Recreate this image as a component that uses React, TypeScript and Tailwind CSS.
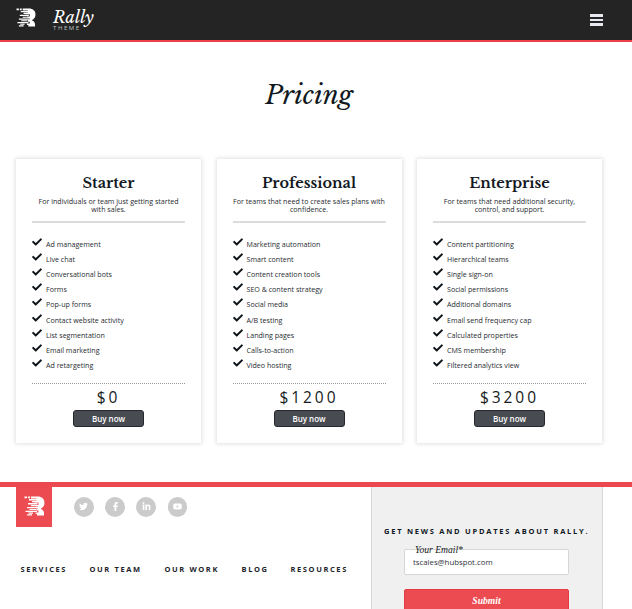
import React from "react";
import { FaCheck, FaTwitter, FaFacebookF, FaLinkedinIn, FaYoutube } from "react-icons/fa";

const plans = [
  {
    name: "Starter",
    blurb: ["For individuals or team just getting started", "with sales."],
    price: "$0",
    features: ["Ad management", "Live chat", "Conversational bots", "Forms", "Pop-up forms", "Contact website activity", "List segmentation", "Email marketing", "Ad retargeting"],
  },
  {
    name: "Professional",
    blurb: ["For teams that need to create sales plans with", "confidence."],
    price: "$1200",
    features: ["Marketing automation", "Smart content", "Content creation tools", "SEO & content strategy", "Social media", "A/B testing", "Landing pages", "Calls-to-action", "Video hosting"],
  },
  {
    name: "Enterprise",
    blurb: ["For teams that need additional security,", "control, and support."],
    price: "$3200",
    features: ["Content partitioning", "Hierarchical teams", "Single sign-on", "Social permissions", "Additional domains", "Email send frequency cap", "Calculated properties", "CMS membership", "Filtered analytics view"],
  },
];

const links = [
  { label: "SERVICES", width: "w-[69px]" },
  { label: "OUR TEAM", width: "w-[75px]" },
  { label: "OUR WORK", width: "w-[77px]" },
  { label: "BLOG", width: "w-[49px]" },
  { label: "RESOURCES", width: "w-[62px]" },
];

const socials = [FaTwitter, FaFacebookF, FaLinkedinIn, FaYoutube];

function RallyMark({ className }: { className: string }) {
  return (
    <svg viewBox="0 0 21 20" className={className} fill="currentColor">
      <path d="M7 0.5H13.5C18 0.5 20.5 3 20.5 6.8C20.5 9.6 19 11.8 16.6 12.8C18.8 13.6 19.8 15 20 17V19.5H13V17.8H11.5V16.4H14.5V14.4H12.5V12.6H14V10.6H12V8.9H14.5V6.6H10.5V4.9H12.5V2.5H7Z" />
      <path d="M0.5 0.5H3V2.3H0.5ZM4 0.5H6V2.3H4ZM5 3.1H13V4.4H5ZM8 5.1H13.5V6.2H8ZM4 7H13.5V8.4H4ZM7 9.1H12.5V10.2H7ZM3 11H14V12.3H3ZM5.5 12.9H12V14H5.5ZM1.5 14.7H13V16H1.5ZM4.5 16.6H9V17.7H4.5ZM3 18.2H8V19.5H3Z" />
    </svg>
  );
}

function PlanCard({ plan }: { plan: (typeof plans)[number] }) {
  return (
    <section className="flex h-[284px] w-[185px] flex-col items-center bg-white px-4 pt-[14px] shadow-[0_0_4px_1px_rgba(0,0,0,0.12)]">
      <h2 className="h-[24px] font-['Libre_Baskerville','Liberation_Serif',serif] text-[14.5px] leading-[21px] font-bold text-[#13191f]">{plan.name}</h2>
      <p className="h-[24px] text-center text-[7.1px] leading-[8.6px] whitespace-nowrap text-[#272b31]">
        {plan.blurb[0]}
        <br />
        {plan.blurb[1]}
      </p>
      <div className="h-[2px] w-full shrink-0 bg-[#dcdcdc]" />
      <ul className="mt-[13.5px] h-[146.5px] w-full">
        {plan.features.map((feature) => (
          <li key={feature} className="flex h-[15.2px] items-center gap-[4px] text-[7.1px] leading-[15px] whitespace-nowrap text-[#272b31]">
            <FaCheck className="mb-[4px] size-[10px] shrink-0 text-[#0d1318]" />
            <span className="pt-[1px]">{feature}</span>
          </li>
        ))}
      </ul>
      <div className="w-full border-t border-dotted border-[#999]" />
      <p className="mt-[3px] h-[23px] text-[15.5px] leading-[21px] tracking-[2.9px] text-[#151a20]">{plan.price}</p>
      <button className="h-[17px] w-[71px] shrink-0 rounded-[3px] border border-[#25292f] bg-[#494b52] text-[8px] leading-[13px] font-semibold text-white">Buy now</button>
    </section>
  );
}

export default function App() {
  return (
    <div className="h-[609px] w-[632px] overflow-hidden bg-white font-['Open_Sans','Noto_Sans',sans-serif]">
      <header className="flex h-[42px] items-start justify-between border-b-2 border-[#ee4047] bg-[#242424] pr-[29px] pl-4 text-white">
        <div className="flex">
          <RallyMark className="mt-[8px] h-[19px] w-[20px]" />
          <div className="ml-[17px] pt-[9px]">
            <div className="h-[16px] font-['Libre_Baskerville','Liberation_Serif',serif] text-[16.5px] leading-[17px] italic">Rally</div>
            <div className="text-[6px] leading-[6px] tracking-[1.6px] text-[#bfc4c8]">THEME</div>
          </div>
        </div>
        <div className="mt-[14px] flex w-[13px] flex-col gap-[2px]">
          <div className="h-[3px] bg-[#e8e8ef]" />
          <div className="h-[2px] bg-[#e8e8ef]" />
          <div className="h-[3px] bg-[#e8e8ef]" />
        </div>
      </header>

      <main className="h-[440px]">
        <h1 className="h-[116.5px] pt-[36px] pr-[14px] text-center font-['Libre_Baskerville','Liberation_Serif',serif] text-[25.5px] leading-[34px] text-[#101820] italic">Pricing</h1>
        <div className="flex gap-[15.5px] pl-4">
          {plans.map((plan) => (
            <PlanCard key={plan.name} plan={plan} />
          ))}
        </div>
      </main>

      <footer className="h-[127px] border-t-[5px] border-[#ec484f]">
        <div className="flex h-full">
          <div className="w-[371px] pl-4">
            <div className="flex h-[40px]">
              <div className="flex h-[40px] w-[36px] justify-center bg-[#ed4b52] pt-[9px] text-white">
                <RallyMark className="h-[20px] w-[21px]" />
              </div>
              <div className="ml-[22px] flex gap-[11.5px] pt-[10px]">
                {socials.map((Icon, index) => (
                  <div key={index} className="flex size-[19.7px] items-center justify-center rounded-full bg-[#cbcbcb] text-white">
                    <Icon className="size-[9px]" />
                  </div>
                ))}
              </div>
            </div>
            <nav className="mt-[36px] ml-[4.5px] flex text-[7.5px] leading-[13px] font-bold tracking-[1.6px] whitespace-nowrap text-[#1d232a]">
              {links.map((link) => (
                <a key={link.label} className={link.width}>{link.label}</a>
              ))}
            </nav>
          </div>
          <aside className="h-full w-[232px] border-x border-[#d8d8d8] bg-[#f0f0f0]">
            <h3 className="pt-[38px] pl-[12px] text-[7.5px] leading-[13px] font-bold tracking-[1.75px] whitespace-nowrap text-[#11181f]">GET NEWS AND UPDATES ABOUT RALLY.</h3>
            <div className="relative mt-[11px] ml-[32px] h-[26px] w-[165px] rounded-[2px] border border-[#d6d6d6] bg-white pl-[8px] text-[7.8px] leading-[25px] text-[#30343b]">
              <label className="absolute -top-[7px] left-[10px] font-['Liberation_Serif',serif] text-[9.6px] leading-[13px] whitespace-nowrap text-[#151a20] italic">Your Email*</label>
              tscales@hubspot.com
            </div>
            <button className="mt-[14px] ml-[32px] h-[32px] w-[165px] rounded-t-[2px] border border-[#e63b42] bg-[#ed4b52] pb-[9px] text-center font-['Liberation_Serif',serif] text-[9.6px] leading-[13px] font-bold text-white italic">Submit</button>
          </aside>
        </div>
      </footer>
    </div>
  );
}
